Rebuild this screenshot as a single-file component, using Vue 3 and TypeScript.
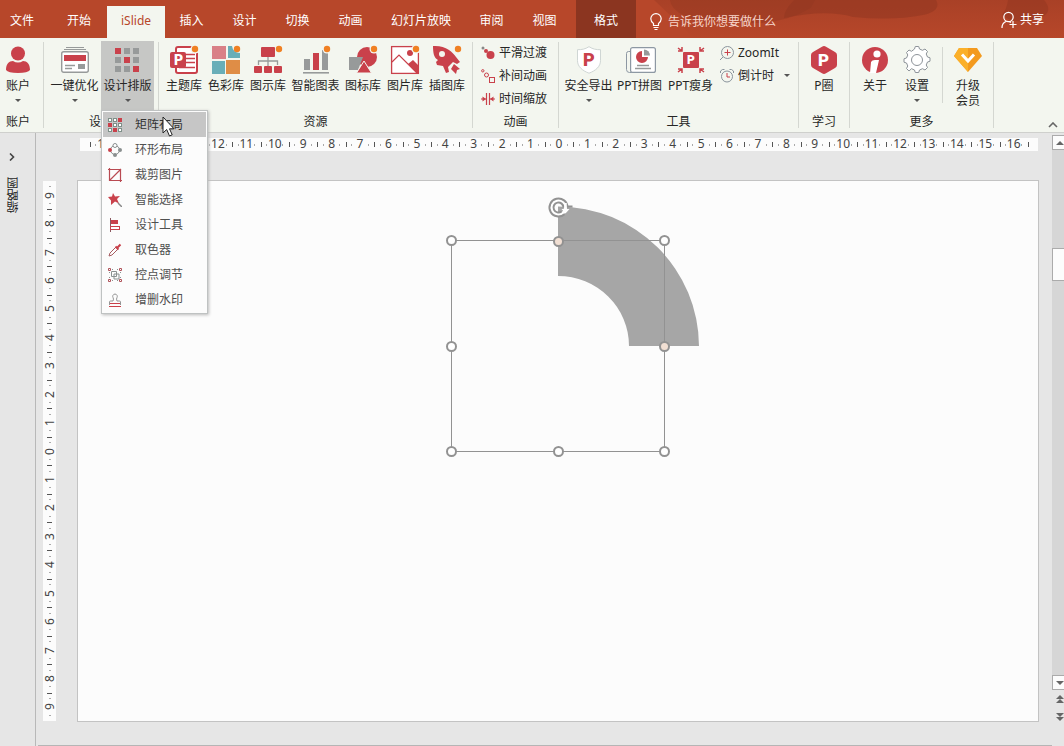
<script setup lang="ts">
import { ref } from 'vue'

interface Tool {
  label: string
  icon: string
  arrow?: boolean
}

const tabs = ['文件', '开始', 'iSlide', '插入', '设计', '切换', '动画', '幻灯片放映', '审阅', '视图', '格式']
const activeTab = ref('iSlide')

const red = '#c9414b'
const grey = '#979a9a'
const dot = '<circle cx="25" cy="3" r="3.2" fill="#f08023"/>'

const icons: Record<string, string> = {
  user: `<circle cx="14" cy="7.500" r="7" fill="${red}"/><path d="M2 24c0-6 3-9 7-9q5 3 10 0c4 0 7 3 7 9q-2 3-12 3T2 24z" fill="${red}"/>`,
  optimize: `<path d="M5 1.500h18M3 3.500h22" stroke="${grey}" fill="none"/><rect x=".7" y="5.700" width="26.600" height="20.600" rx="2" fill="#fff" stroke="${grey}" stroke-width="1.400"/><rect x="3" y="9" width="22" height="6" fill="${red}"/><path d="M4 19.500h10M4 22.500h7" stroke="${grey}" stroke-width="1.500"/><rect x="17" y="18" width="7" height="5" fill="${grey}"/>`,
  matrix: [0, 1, 2].map((r) => [0, 1, 2].map((c) => `<rect x="${1 + c * 9}" y="${2 + r * 9}" width="6" height="6" fill="${r === c ? red : grey}"/>`).join('')).join(''),
  theme: `<rect x="6" y="1" width="21" height="26" rx="2" fill="#fff" stroke="${red}" stroke-width="2"/><path d="M16 8.500h9M16 12.500h9M16 16.500h9M9 21.500h16" stroke="${red}" stroke-width="1.700"/><rect y="6" width="16" height="16" rx="2" fill="${red}"/><text x="4" y="19" font-family="Roboto, sans-serif" font-weight="900" font-size="14" fill="#fff">P</text><circle cx="25" cy="3" r="4.500" fill="#f3f6ef"/>${dot}`,
  colors: `<rect width="14" height="13" fill="#d98087"/><path d="M16 0h4q1 7 8 7v5H16z" fill="#69aeb8"/><rect y="15" width="13" height="13" fill="#69aeb8"/><rect x="14" y="14" width="14" height="14" fill="#df8d46"/>${dot}`,
  diagram: `<rect x="7" y="1" width="14" height="10" rx="1" fill="${red}"/><path d="M14 11v9M4.500 19v-4h19v4" fill="none" stroke="${grey}" stroke-width="1.300"/><rect y="20" width="8" height="7" rx="1" fill="${red}"/><rect x="10" y="20" width="8" height="7" rx="1" fill="${red}"/><rect x="20" y="20" width="8" height="7" rx="1" fill="${red}"/>${dot}`,
  chart: `<rect x="2" y="13" width="6" height="11" fill="${grey}"/><rect x="11" y="7" width="6" height="17" fill="${red}"/><rect x="20" y="4" width="6" height="20" fill="${grey}"/><rect x="1" y="26" width="26" height="1.600" fill="${grey}"/><circle cx="25" cy="3" r="4.500" fill="#f3f6ef"/>${dot}`,
  shapes: `<circle cx="18" cy="11" r="10" fill="${red}"/><path d="M0 11h14l-5 13H0z" fill="${grey}"/><path d="M15 15l7.500 12h-15z" fill="${red}" stroke="#f3f6ef"/><circle cx="25" cy="3" r="4.500" fill="#f3f6ef"/>${dot}`,
  picture: `<rect x=".6" y=".6" width="26.800" height="26.800" fill="#fff" stroke="${red}" stroke-width="1.300"/><path d="M1 16l7-7 18 18" fill="none" stroke="${red}" stroke-width="1.200"/><path d="M17 18l5-4 5 5v8h-1z" fill="${red}"/><circle cx="19" cy="7" r="3" fill="${red}"/><circle cx="25" cy="3" r="4.500" fill="#f3f6ef"/>${dot}`,
  rocket: `<path d="M0 0c12-1 20 6 23 11l4 5-3 2-4-2-5 5 1 5-3 1-3-7-6-1-1-3 2-2C1 12 0 7 0 0z" fill="${red}"/><circle cx="9" cy="8" r="3" fill="#f3f6ef"/><path d="M21 18l6 5-3 1-1 4-5-5z" fill="${red}"/>${dot}`,
  shield: `<path d="M14 .7c4 2.500 7 3 11.500 3v11c0 6-5 10-11.500 12.500C7.500 24.700 2.500 20.700 2.500 14.700v-11c4.500 0 7.500-.5 11.500-3z" fill="#fff" stroke="#cfd6d4"/><text x="8" y="20" font-family="Roboto, sans-serif" font-weight="900" font-size="18" fill="${red}">P</text>`,
  collage: `<path d="M4 5.500H2.500q-2 0-2 2v16q0 3 3 3H21" fill="none" stroke="#8d98a3"/><rect x="4.600" y="1.600" width="24.800" height="24.800" rx="2" fill="#fff" stroke="#8d98a3" stroke-width="1.200"/><path d="M16 5a6 6 0 1 0 6 6h-6z" fill="${red}"/><path d="M18 3.500a6 6 0 0 1 6 6h-6z" fill="${grey}"/><path d="M11 19.500h12M9 22.500h16" stroke="${grey}" stroke-width="1.500"/>`,
  slim: `<rect x="6" y="6" width="16" height="16" rx="1" fill="${red}"/><text x="10" y="18" font-family="Roboto, sans-serif" font-weight="900" font-size="12" fill="#fff">P</text><path d="M1 2l4 3M5 1v4H1M27 2l-4 3M23 1v4h4M1 26l4-3M5 27v-4H1M27 26l-4-3M23 27v-4h4" stroke="${red}" stroke-width="1.500" fill="none"/>`,
  hexagon: `<path d="M14 0q1 0 2 .7l9 5.300q2 1 2 3v10q0 2-2 3l-9 5.300q-2 1.200-4 0L3 22q-2-1-2-3V9q0-2 2-3L12 .7Q13 0 14 0z" fill="${red}"/><text x="8" y="20" font-family="Roboto, sans-serif" font-weight="900" font-size="17" fill="#fff">P</text>`,
  about: `<circle cx="14" cy="14" r="13" fill="${red}"/><circle cx="16" cy="8" r="3.600" fill="#fff"/><path d="M10 16q1-2 4-2h4l-3 13h-6z" fill="#fff"/>`,
  gear: `<path d="M11.500 3l.8-2.500h3.400l.8 2.500 3 1.300 2.500-1.300 2.500 2.500-1.300 2.500 1.300 3 2.500.8v3.400l-2.500.8-1.300 3 1.300 2.500-2.500 2.500-2.500-1.300-3 1.300-.8 2.500h-3.400l-.8-2.500-3-1.300L6 25l-2.500-2.500L4.800 20l-1.300-3-2.500-.8v-3.400l2.500-.8 1.300-3L3.500 6.500 6 4l2.500 1.300z" fill="#fff" stroke="#8d9399"/><circle cx="14" cy="14" r="5.500" fill="#fff" stroke="#8d9399"/>`,
  diamond: `<path d="M5 2h18l5 8-14 16L0 10z" fill="#f39a1e"/><path d="M5 2h9v24L0 10z" fill="#fbb02a"/><path d="M8 8.500l6 6.500 6-6.500" stroke="#fff" stroke-width="3" fill="none"/>`,
}

const resources: Tool[] = [
  { label: '主题库', icon: 'theme' },
  { label: '色彩库', icon: 'colors' },
  { label: '图示库', icon: 'diagram' },
  { label: '智能图表', icon: 'chart' },
  { label: '图标库', icon: 'shapes' },
  { label: '图片库', icon: 'picture' },
  { label: '插图库', icon: 'rocket' },
]

const exporters: Tool[] = [
  { label: '安全导出', icon: 'shield', arrow: true },
  { label: 'PPT拼图', icon: 'collage' },
  { label: 'PPT瘦身', icon: 'slim' },
]

const motions = [
  { label: '平滑过渡', icon: `<circle cx="2" cy="2" r="1.500" fill="#888"/><circle cx="5" cy="5" r="2" fill="${red}"/><circle cx="9.500" cy="9" r="4" fill="${red}"/>` },
  { label: '补间动画', icon: `<circle cx="1.800" cy="1.800" r="1.200" fill="none" stroke="${red}"/><circle cx="5.500" cy="6" r="2" fill="none" stroke="${red}"/><rect x="8.500" y="8.500" width="5" height="5" fill="none" stroke="${red}"/>` },
  { label: '时间缩放', icon: `<path d="M5.500 1v12M8.500 1v12M0 7h5M9 7h5" stroke="${red}" stroke-width="1.200"/><path d="M1.500 4.500L5 7 1.500 9.500zM12.500 4.500L9 7l3.500 2.500z" fill="${red}"/>` },
]

const grid = [0, 1, 2].map((r) => [0, 1, 2].map((c) => {
  const filled = [2, 3, 7].includes(r * 3 + c)
  return `<rect x="${0.5 + c * 5}" y="${0.5 + r * 5}" width="3" height="3" fill="${filled ? red : '#fff'}" stroke="${filled ? red : '#7f9089'}"/>`
}).join('')).join('')

const menu = [
  { label: '矩阵布局', icon: grid },
  { label: '环形布局', icon: `<circle cx="7" cy="7" r="4.500" fill="none" stroke="#8a8f8f"/><circle cx="7" cy="2.500" r="2" fill="#fff" stroke="#8a8f8f"/><circle cx="12" cy="7" r="2" fill="#8a8f8f"/><circle cx="7" cy="12" r="2" fill="#8a8f8f"/><circle cx="2" cy="7" r="2" fill="${red}"/>` },
  { label: '裁剪图片', icon: '<path d="M1.500 0v12.500H14M0 1.500h12.500V14M1.500 12.500L13 1" fill="none" stroke="#b94a52" stroke-width="1.200"/>' },
  { label: '智能选择', icon: `<path d="M5 0l2 3.500 5-.5-3 3 2 4.500-4-2L3 12V7.500L0 4l4-.5z" fill="${red}"/><path d="M10 10l4 4" stroke="#888" stroke-width="1.500"/>` },
  { label: '设计工具', icon: `<path d="M2.500 0v14" stroke="#8c5960"/><rect x="3" y="2" width="7" height="4" fill="${red}"/><rect x="2.500" y="8.500" width="9" height="3" fill="#fff" stroke="${red}"/>` },
  { label: '取色器', icon: `<path d="M1 13l1-3 6-6 2 2-6 6z" fill="#fff" stroke="#a65c60"/><path d="M7.500 3.500l3 3M9.500 4.500l3-3" fill="none" stroke="${red}" stroke-width="2"/>` },
  { label: '控点调节', icon: '<path d="M3.500 3.500h5v5h-5zM6 6h5v5H6zM4 1.500h1M9 1.500h1M1.500 4v1M1.500 9v1M4 12.500h1M9 12.500h1M12.500 4v1M12.500 9v1" fill="none" stroke="#8a9090"/><path d="M.5.500h2v2h-2zM11.500.500h2v2h-2zM.5 11.500h2v2h-2zM11.500 11.500h2v2h-2z" fill="#fff" stroke="#b0535a"/>' },
  { label: '增删水印', icon: `<path d="M1.500 12v-3q0-1 1-1H5q1-2 0-3.500a2.300 2.300 0 1 1 4 0Q8 6 9 8h2.500q1 0 1 1v3" fill="none" stroke="#959595"/><path d="M2 10.500h10M1 13.500h12" stroke="${red}" fill="none"/>` },
]

const horizontal = Array.from({ length: 33 }, (_, i) => Math.abs(i - 16))
const vertical = Array.from({ length: 19 }, (_, i) => Math.abs(i - 9))

const handles = [
  [373.5, 59.5], [586.5, 59.5], [373.5, 165.5],
  [373.5, 270.5], [480.5, 270.5], [586.5, 270.5],
]
const adjusters = [[480.5, 60.5], [586.5, 165.5]]
</script>

<template>
  <div class="app">
    <header class="titlebar">
      <svg class="texture" viewBox="0 0 430 38" preserveAspectRatio="xMaxYMin slice" aria-hidden="true">
        <defs>
          <linearGradient id="shade" x1="0" x2="0" y1="0" y2="1">
            <stop offset="0" stop-color="#8f3520" stop-opacity=".35" />
            <stop offset="1" stop-color="#8f3520" stop-opacity="0" />
          </linearGradient>
        </defs>
        <path d="M20 0h410v38H60z" fill="url(#shade)" />
        <path d="M36 0h145l-4 8q-24 14-52 15-25 0-34-6-25 6-42-2-12-6-13-15z" fill="#913620" opacity=".4" />
        <path d="M160 0h142q6 11-13 15-30 6-70 2-27-8-69 1 0-8 10-18z" fill="#913620" opacity=".55" />
        <path d="M374 0h36q12 14-10 20-22 4-32-5 5-6 6-15z" fill="#913620" opacity=".5" />
      </svg>
      <nav class="tabs" role="tablist">
        <button
          v-for="tab in tabs" :key="tab" type="button" role="tab" class="tab"
          :class="{ active: activeTab === tab, file: tab === '文件', start: tab === '开始', contextual: tab === '格式' }"
          :aria-selected="activeTab === tab" @click="activeTab = tab"
        >{{ tab }}</button>
      </nav>
      <label class="tell">
        <svg width="12" height="18" viewBox="0 0 12 18" fill="none" stroke="#fff" stroke-width="1.200">
          <path d="M3.500 12.500v-2Q.8 8.500.8 5.800a5.200 5.200 0 0 1 10.400 0q0 2.700-2.700 4.700v2zM3.500 14.500h5M4.500 16.500h3" />
        </svg>
        <input type="text" aria-label="告诉我你想要做什么" placeholder="告诉我你想要做什么">
      </label>
      <button type="button" class="share">
        <svg width="16" height="18" viewBox="0 0 16 18" fill="none" stroke="#fff" stroke-width="1.200">
          <circle cx="7.500" cy="6" r="4.700" /><path d="M1 17q0-5 4-6.500M8 10.500l2 1M12 10v7M8.500 13.500h7" />
        </svg>
        共享
      </button>
    </header>

    <section class="ribbon">
      <div class="group account">
        <div class="items">
          <button type="button" class="tool">
            <svg class="icon" viewBox="0 0 28 28" v-html="icons.user" />
            <span>账户</span><i class="caret" />
          </button>
        </div>
        <div class="caption">账户</div>
      </div>

      <div class="group design">
        <div class="items">
          <button type="button" class="tool">
            <svg class="icon" viewBox="0 0 28 28" v-html="icons.optimize" />
            <span>一键优化</span><i class="caret" />
          </button>
          <div class="dropdown">
            <button type="button" class="tool pressed" aria-haspopup="menu" aria-expanded="true">
              <svg class="icon" viewBox="0 0 28 28" v-html="icons.matrix" />
              <span>设计排版</span><i class="caret" />
            </button>
            <div class="menu" role="menu">
              <button v-for="(item, i) in menu" :key="item.label" type="button" role="menuitem" class="entry" :class="{ hovered: i === 0 }">
                <svg width="14" height="14" viewBox="0 0 14 14" v-html="item.icon" />
                {{ item.label }}
              </button>
              <svg class="pointer" width="13" height="21" viewBox="0 0 13 21">
                <path d="M1 1v16l3.700-3.500L7.500 20l2.700-1.200-2.700-6H12z" fill="#fff" stroke="#222" />
              </svg>
            </div>
          </div>
        </div>
        <div class="caption">设计</div>
      </div>

      <div class="group resource">
        <div class="items">
          <button v-for="t in resources" :key="t.label" type="button" class="tool" :class="{ wide: t.label.length > 3 }">
            <svg class="icon" viewBox="0 0 28 28" v-html="icons[t.icon]" />
            <span>{{ t.label }}</span>
          </button>
        </div>
        <div class="caption">资源</div>
      </div>

      <div class="group motion">
        <div class="items stack">
          <button v-for="m in motions" :key="m.label" type="button" class="small">
            <svg width="14" height="14" viewBox="0 0 14 14" v-html="m.icon" />{{ m.label }}
          </button>
        </div>
        <div class="caption">动画</div>
      </div>

      <div class="group tools">
        <div class="items">
          <button v-for="t in exporters" :key="t.label" type="button" class="tool">
            <svg class="icon" viewBox="0 0 28 28" v-html="icons[t.icon]" />
            <span>{{ t.label }}</span><i v-if="t.arrow" class="caret" />
          </button>
          <div class="stack">
            <button type="button" class="small">
              <svg width="14" height="14" viewBox="0 0 14 14" fill="none" stroke="#8a949c">
                <circle cx="7.500" cy="6.500" r="6" /><path d="M3 11l-3 3" /><path d="M4.500 6.500h6M7.500 3.500v6" stroke="#c9414b" />
              </svg>ZoomIt
            </button>
            <button type="button" class="small">
              <svg width="14" height="14" viewBox="0 0 14 14" fill="none" stroke="#8a949c">
                <circle cx="7" cy="7.500" r="5.500" /><path d="M.5 4V2l2-1.500h2M13.500 4V2l-2-1.500h-2" /><path d="M7 4v4h3" stroke="#c9414b" />
              </svg>倒计时<i class="caret" />
            </button>
          </div>
        </div>
        <div class="caption">工具</div>
      </div>

      <div class="group study">
        <div class="items">
          <button type="button" class="tool">
            <svg class="icon" viewBox="0 0 28 28" v-html="icons.hexagon" />
            <span>P圈</span>
          </button>
        </div>
        <div class="caption">学习</div>
      </div>

      <div class="group more">
        <div class="items">
          <button type="button" class="tool">
            <svg class="icon" viewBox="0 0 28 28" v-html="icons.about" />
            <span>关于</span>
          </button>
          <button type="button" class="tool">
            <svg class="icon" viewBox="0 0 28 28" v-html="icons.gear" />
            <span>设置</span><i class="caret" />
          </button>
          <div class="divider" />
          <button type="button" class="tool upgrade">
            <svg class="icon" viewBox="0 0 28 28" v-html="icons.diamond" />
            <span>升级<br>会员</span>
          </button>
        </div>
        <div class="caption">更多</div>
      </div>

      <button type="button" class="collapse" aria-label="折叠功能区">
        <svg width="10" height="6" viewBox="0 0 10 6"><path d="M1 5l4-4 4 4" fill="none" stroke="#666" stroke-width="1.600" /></svg>
      </button>
    </section>

    <main class="body">
      <aside class="rail">
        <button type="button" aria-label="展开缩略图">
          <svg width="6" height="8" viewBox="0 0 6 8"><path d="M1 .5L4.500 4 1 7.500" fill="none" stroke="#444" stroke-width="1.600" /></svg>
        </button>
        <span>缩略图</span>
      </aside>

      <div class="workspace">
        <div class="ruler-x">
          <span v-for="(n, i) in horizontal" :key="i">{{ n }}</span>
        </div>
        <div class="stage">
          <div class="ruler-y">
            <span v-for="(n, i) in vertical" :key="i"><b>{{ n }}</b></span>
          </div>
          <div class="slide">
            <svg viewBox="0 0 960 540" aria-hidden="true">
              <path d="M480 25.500A141 140 0 0 1 621 165H551A71 70 0 0 0 480 95z" fill="#a6a6a6" />
              <rect x="373.500" y="59.500" width="213" height="211" fill="none" stroke="#929292" />
              <g stroke="#929292" stroke-width="2">
                <circle v-for="(h, i) in handles" :key="i" :cx="h[0]" :cy="h[1]" r="4.500" fill="#fff" />
                <circle v-for="(h, i) in adjusters" :key="'a' + i" :cx="h[0]" :cy="h[1]" r="4.500" fill="#f1dfd3" />
              </g>
              <g fill="none">
                <circle cx="480.500" cy="26.500" r="7" stroke="#fff" stroke-width="3" />
                <path d="M489.500 26.500a9 9 0 1 0-3 6.700" stroke="#929292" stroke-width="2" />
                <path d="M485.500 26.500a5 5 0 1 0-2 4" stroke="#929292" stroke-width="2" />
                <path d="M487.500 22v7" stroke="#fff" stroke-width="2.500" />
                <path d="M483.500 28h8l-4 4.500z" fill="#fff" />
                <path d="M489.500 25.500h5" stroke="#929292" stroke-width="2" />
              </g>
            </svg>
          </div>
        </div>
      </div>

      <div class="scroll">
        <button type="button" class="step up" aria-label="向上滚动"><svg width="8" height="4"><path d="M0 4l4-4 4 4z" /></svg></button>
        <div class="track"><div class="thumb" /></div>
        <button type="button" class="step down" aria-label="向下滚动"><svg width="8" height="4"><path d="M0 0l4 4 4-4z" /></svg></button>
        <button type="button" class="jump" aria-label="上一张幻灯片"><svg width="8" height="9"><path d="M0 4l4-4 4 4zM0 8l4-4 4 4z" /></svg></button>
        <button type="button" class="jump" aria-label="下一张幻灯片"><svg width="8" height="9"><path d="M0 0l4 4 4-4zM0 4l4 4 4-4z" /></svg></button>
      </div>
    </main>
  </div>
</template>

<style>
body {
  margin: 0;
}
</style>

<style scoped>
.app {
  display: flex;
  flex-direction: column;
  min-height: 100vh;
  background: #e6e6e6;
  color: #262626;
  font: 12px/16px "Noto Sans", "Noto Sans CJK SC", sans-serif;
}

button {
  margin: 0;
  padding: 0;
  border: 0;
  background: none;
  color: inherit;
  font: inherit;
  white-space: nowrap;
}

svg {
  flex: none;
}

.titlebar {
  position: relative;
  display: flex;
  height: 38px;
  background: #b7472a;
  color: #fff;
}

.texture {
  position: absolute;
  top: 0;
  right: 0;
  width: 430px;
  height: 38px;
}

.tabs {
  position: relative;
  display: flex;
  align-items: flex-end;
}

.tab {
  min-width: 53px;
  height: 32px;
  padding: 0 14px 2px;
}

.tab.file {
  min-width: 44px;
  padding: 0 10px 2px;
  margin-right: 7px;
}

.tab.start {
  width: 56px;
}

.tab.active {
  width: 58px;
  background: #f3f6ef;
  color: #b7472a;
}

.tab.contextual {
  width: 60px;
  height: 38px;
  margin-left: 5px;
  padding-top: 6px;
  background: #8b3520;
}

.tell {
  position: relative;
  display: flex;
  flex: 1;
  align-items: center;
  gap: 6px;
  padding: 5px 0 0 14px;
}

.tell input {
  width: 140px;
  padding: 0;
  border: 0;
  outline: 0;
  background: none;
  color: #fff;
  font: inherit;
}

.tell input::placeholder {
  color: #f6d5ca;
  opacity: 1;
}

.share {
  position: relative;
  display: flex;
  align-items: center;
  gap: 3px;
  margin-right: 20px;
  padding-top: 2px;
}

.ribbon {
  display: flex;
  height: 94px;
  background: #f3f6ef;
  border-bottom: 1px solid #cfd0cd;
}

.group {
  display: flex;
  flex-direction: column;
  box-sizing: border-box;
  height: 86px;
  margin-top: 4px;
  border-right: 1px solid #d4d7d1;
}

.items {
  display: flex;
  flex: 1;
  justify-content: center;
}

.caption {
  height: 14px;
  text-align: center;
}

.tool {
  display: flex;
  flex-direction: column;
  align-items: center;
  box-sizing: border-box;
  width: 42px;
  height: 69px;
  margin-top: -1px;
  padding-top: 5px;
}

.icon {
  width: 28px;
  height: 28px;
  margin-bottom: 4px;
  overflow: visible;
}

.caret {
  width: 0;
  border: 3px solid transparent;
  border-top-color: #555;
  border-bottom: 0;
}

.tool .caret {
  margin-top: 5px;
}

.tool.wide,
.design .tool {
  width: 53px;
}

.account {
  width: 44px;
}

.account .items,
.account .caption {
  margin-right: 7px;
}

.design {
  width: 115px;
}

.design .items {
  justify-content: flex-start;
  padding-left: 4px;
}

.dropdown {
  position: relative;
}

.pressed {
  background: #c6c7c5;
}

.resource {
  width: 314px;
}

.motion {
  width: 86px;
}

.stack {
  display: flex;
  flex-direction: column;
  align-items: flex-start;
  justify-content: flex-start;
}

.motion .stack {
  padding-left: 8px;
}

.small {
  display: flex;
  align-items: center;
  gap: 4px;
  height: 23px;
}

.small .caret {
  margin-left: 6px;
}

.stack .small:first-child {
  height: 22px;
}

.tools {
  width: 240px;
}

.tools .items {
  justify-content: flex-start;
  padding-left: 4px;
}

.tools .tool {
  width: 51px;
}

.tools .stack {
  margin-left: 4px;
}

.study {
  width: 51px;
}

.more {
  width: 144px;
}

.divider {
  width: 1px;
  height: 56px;
  margin: 5px 4px 0;
  background: #d4d7d1;
}

.upgrade {
  line-height: 15px;
}

.collapse {
  align-self: flex-end;
  margin: 0 6px 4px auto;
  line-height: 8px;
}

.menu {
  position: absolute;
  z-index: 2;
  top: 68px;
  left: 0;
  display: flex;
  flex-direction: column;
  width: 103px;
  padding: 1px;
  border: 1px solid #bfc2c2;
  background: #fcfcfc;
  box-shadow: 1px 1px 3px #bbb;
}

.entry {
  display: flex;
  align-items: center;
  gap: 13px;
  height: 25px;
  padding-left: 5px;
  color: #505050;
}

.entry.hovered {
  background: #c6c6c6;
  color: #333;
}

.pointer {
  position: absolute;
  top: 5px;
  left: 60px;
}

.body {
  display: flex;
  flex: 1;
}

.rail {
  display: flex;
  flex-direction: column;
  align-items: center;
  box-sizing: border-box;
  width: 36px;
  padding: 16px 12px 0 0;
  border-right: 1px solid #b8b8b8;
}

.rail span {
  margin-top: 12px;
  padding-right: 4px;
  writing-mode: vertical-rl;
  transform: rotate(180deg);
}

.workspace {
  display: flex;
  flex: 1;
  flex-direction: column;
  box-sizing: border-box;
  margin-left: 2px;
  padding: 5px 13px 23px 5px;
  border-bottom: 1px solid #b5b5b5;
}

.ruler-x {
  display: flex;
  height: 13px;
  margin: 0 1px 29px 37px;
  padding: 0 10px;
  background: #fcfcfc;
  color: #444;
  line-height: 12px;
}

.ruler-x span {
  flex: 1;
  text-align: center;
  background:
    linear-gradient(#555, #555) 0 4px / 1px 5px no-repeat,
    linear-gradient(#aaa, #aaa) 20% 6px / 1px 2px no-repeat,
    linear-gradient(#aaa, #aaa) 80% 6px / 1px 2px no-repeat;
}

.ruler-x::after {
  width: 1px;
  height: 5px;
  margin: 4px -1px 0 0;
  background: #555;
  content: "";
}

.stage {
  display: flex;
  flex: 1;
}

.ruler-y {
  display: flex;
  flex-direction: column;
  width: 13px;
  margin: 1px 21px 1px 0;
  background: #fcfcfc;
  color: #444;
}

.ruler-y span {
  display: flex;
  flex: 1;
  align-items: center;
  justify-content: center;
  background:
    linear-gradient(#555, #555) 4px 0 / 5px 1px no-repeat,
    linear-gradient(#aaa, #aaa) 6px 20% / 2px 1px no-repeat,
    linear-gradient(#aaa, #aaa) 6px 80% / 2px 1px no-repeat;
}

.ruler-y span:first-child {
  background-size: 0 0, 2px 1px, 2px 1px;
}

.ruler-y b {
  font-weight: 400;
  line-height: 12px;
  writing-mode: vertical-rl;
  transform: rotate(180deg);
}

.slide {
  flex: 1;
  border: 1px solid #c3c3c3;
  background: #fcfcfc;
}

.slide svg {
  display: block;
  width: 100%;
}

.scroll {
  display: flex;
  flex-direction: column;
  width: 12px;
  padding: 2px 0 20px;
  overflow: hidden;
}

.step,
.jump {
  display: flex;
  align-items: center;
  justify-content: flex-end;
  height: 18px;
}

.step {
  height: 15px;
  border: 1px solid #ababab;
  border-right: 0;
  background: #fcfcfc;
}

.scroll path {
  fill: #666;
}

.track {
  flex: 1;
  padding-top: 98px;
  background: #d6d6d6;
}

.thumb {
  height: 31px;
  border: 1px solid #ababab;
  border-right: 0;
  background: #fcfcfc;
}
</style>
